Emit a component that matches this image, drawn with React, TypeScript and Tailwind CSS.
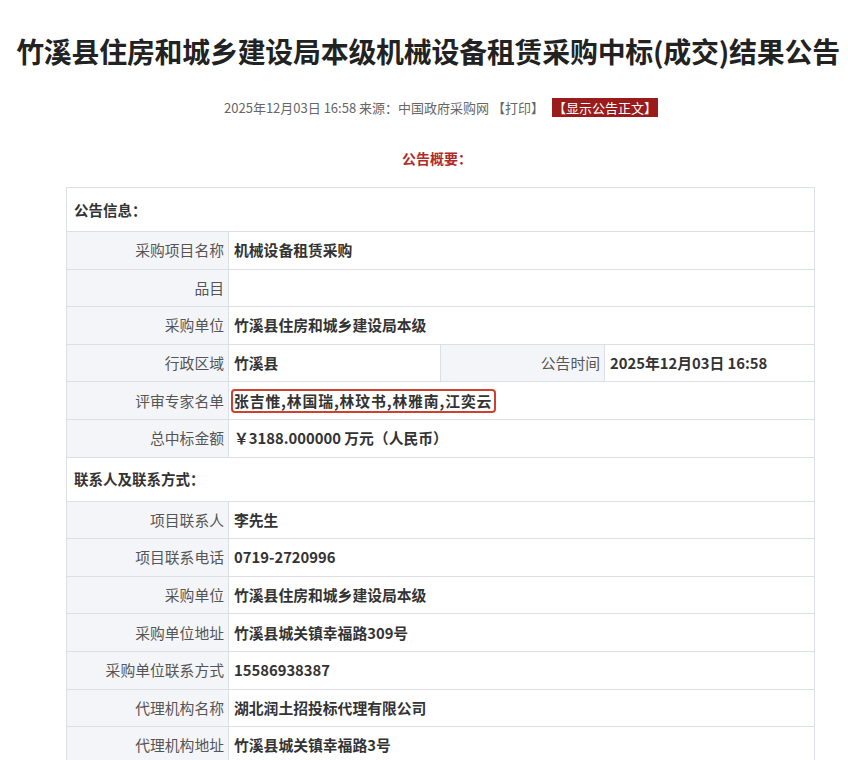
const info = [
  { label: "采购项目名称", value: "机械设备租赁采购" },
  { label: "品目", value: "" },
  { label: "采购单位", value: "竹溪县住房和城乡建设局本级" },
]

const contacts = [
  { label: "项目联系人", value: "李先生" },
  { label: "项目联系电话", value: "0719-2720996" },
  { label: "采购单位", value: "竹溪县住房和城乡建设局本级" },
  { label: "采购单位地址", value: "竹溪县城关镇幸福路309号" },
  { label: "采购单位联系方式", value: "15586938387" },
  { label: "代理机构名称", value: "湖北润土招投标代理有限公司" },
  { label: "代理机构地址", value: "竹溪县城关镇幸福路3号" },
]

function Label({ children, w = "w-[162px]" }: { children: React.ReactNode; w?: string }) {
  return (
    <div className={`${w} shrink-0 bg-[#f3f5f9] border-r border-[#dcdfe5] flex items-center justify-end pr-[4px] text-[#555] text-[14.8px]`}>
      {children}
    </div>
  )
}

function Row({ label, children }: { label: string; children?: React.ReactNode }) {
  return (
    <div className="flex h-[37.6px] border-b border-[#dcdfe5]">
      <Label>{label}</Label>
      <div className="flex-1 flex items-center pl-[5px] text-[14.8px] font-semibold text-[#333]">{children}</div>
    </div>
  )
}

function Section({ title }: { title: string }) {
  return (
    <div className="h-[44px] border-b border-[#dcdfe5] flex items-center pl-[7px] text-[14.5px] font-bold text-[#333]">
      {title}
    </div>
  )
}

export default function App() {
  return (
    <div className="w-[848px] h-[760px] overflow-hidden bg-white" style={{ fontFamily: '"Noto Sans CJK SC", "Noto Sans", sans-serif' }}>
      <h1 className="pt-[31px] pl-[8px] text-center text-[27.9px] leading-[40px] font-bold text-[#222] whitespace-nowrap tracking-[-0.2px]">
        竹溪县住房和城乡建设局本级机械设备租赁采购中标(成交)结果公告
      </h1>

      <div className="mt-[27px] pl-[34px] flex justify-center items-center text-[13px] text-[#666] leading-[19px]">
        <span>2025年12月03日 16:58 来源：中国政府采购网 【打印】</span>
        <span className="ml-[8px] px-[1px] bg-[#9a1b1b] text-white">【显示公告正文】</span>
      </div>

      <div className="mt-[31px] pl-[26px] text-center text-[14px] font-bold text-[#b2292a] leading-[20px]">公告概要：</div>

      <div className="mt-[19px] ml-[66px] w-[749px] border border-[#dcdfe5] border-b-0">
        <Section title="公告信息：" />
        {info.map((r, i) => (
          <Row key={i} label={r.label}>{r.value}</Row>
        ))}
        <div className="flex h-[37.6px] border-b border-[#dcdfe5]">
          <Label>行政区域</Label>
          <div className="w-[212px] shrink-0 border-r border-[#dcdfe5] flex items-center pl-[5px] text-[14.8px] font-semibold text-[#333]">竹溪县</div>
          <Label w="w-[164px]">公告时间</Label>
          <div className="flex-1 flex items-center pl-[5px] text-[14.8px] font-semibold text-[#333]">2025年12月03日 16:58</div>
        </div>
        <Row label="评审专家名单">
          <span className="-ml-[3px] pl-[1px] pr-[2px] border-2 border-[#d0402f] rounded-[4px] leading-[20px] tracking-[0.9px]">张吉惟,林国瑞,林玟书,林雅南,江奕云</span>
        </Row>
        <Row label="总中标金额">￥3188.000000 万元（人民币）</Row>
        <Section title="联系人及联系方式：" />
        {contacts.map((r, i) => (
          <Row key={i} label={r.label}>{r.value}</Row>
        ))}
      </div>
    </div>
  )
}
